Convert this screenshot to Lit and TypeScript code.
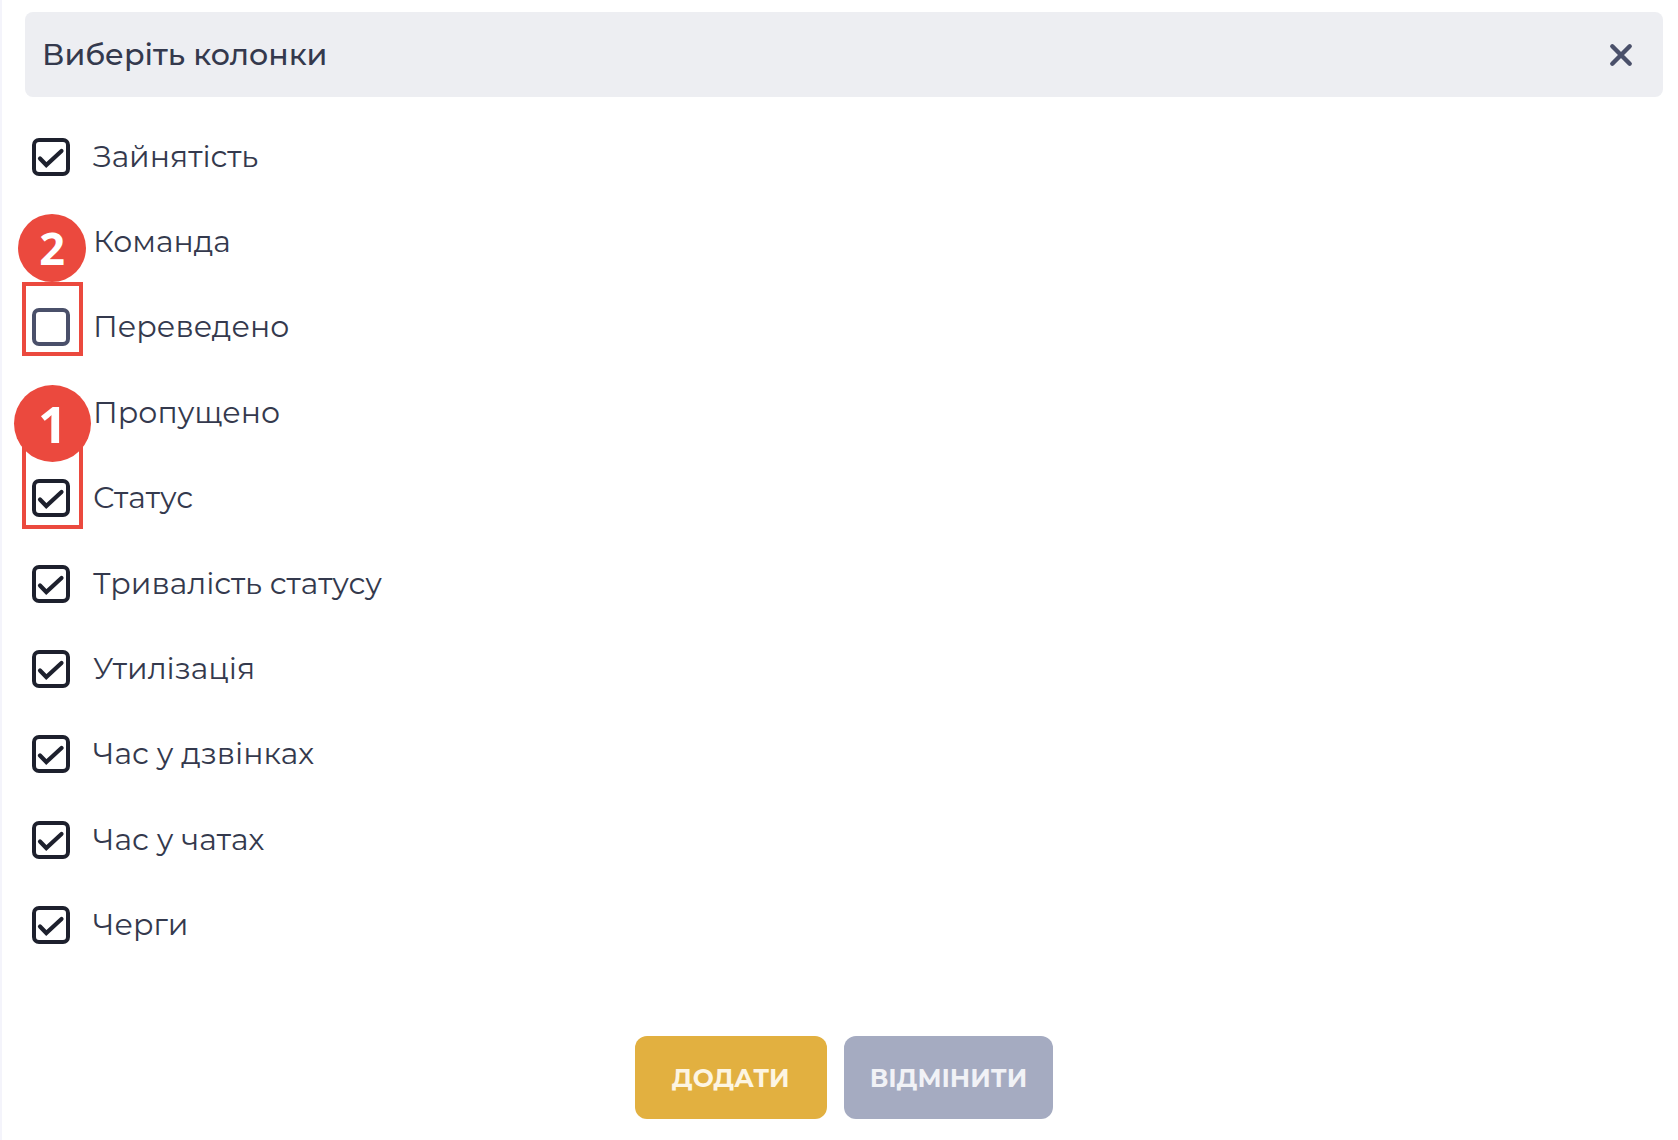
import { LitElement, html, css, svg, nothing } from "lit";
import { customElement, property, state } from "lit/decorators.js";
import { classMap } from "lit/directives/class-map.js";

interface Column {
  id: string;
  label: string;
  checked: boolean;
  callout?: { step: number; size: "small" | "large" };
}

const COLUMNS: Column[] = [
  { id: "occupancy", label: "Зайнятість", checked: true },
  { id: "team", label: "Команда", checked: true },
  { id: "transferred", label: "Переведено", checked: false, callout: { step: 2, size: "small" } },
  { id: "missed", label: "Пропущено", checked: true },
  { id: "status", label: "Статус", checked: true, callout: { step: 1, size: "large" } },
  { id: "status-duration", label: "Тривалість статусу", checked: true },
  { id: "utilization", label: "Утилізація", checked: true },
  { id: "call-time", label: "Час у дзвінках", checked: true },
  { id: "chat-time", label: "Час у чатах", checked: true },
  { id: "queues", label: "Черги", checked: true },
];

/** Numbered step marker with a frame around the checkbox it points at. */
@customElement("step-callout")
class StepCallout extends LitElement {
  @property({ type: Number }) step = 1;
  @property() size: "small" | "large" = "small";

  static styles = css`
    :host {
      display: contents;
    }
    .frame,
    .badge {
      position: absolute;
      box-sizing: border-box;
      pointer-events: none;
    }
    .frame {
      left: -3px;
      width: 61px;
      border: 4px solid #eb493e;
    }
    .badge {
      display: flex;
      align-items: center;
      justify-content: center;
      border-radius: 50%;
      background: #eb493e;
      color: #fff;
      font-family: "Open Sans", "Noto Sans", sans-serif;
      font-weight: 700;
      line-height: 1;
    }
    .small.frame {
      top: calc(50% - 46px);
      height: 74px;
    }
    .small.badge {
      top: calc(50% - 114px);
      left: -7px;
      width: 68px;
      height: 68px;
      font-size: 45px;
    }
    .large.frame {
      top: calc(50% - 68px);
      height: 99px;
    }
    .large.badge {
      top: calc(50% - 113px);
      left: -11px;
      width: 77px;
      height: 77px;
      font-size: 51px;
    }
  `;

  render() {
    const size = { small: this.size === "small", large: this.size === "large" };
    return html`
      <span class=${classMap({ frame: true, ...size })}></span>
      <span class=${classMap({ badge: true, ...size })}>${this.step}</span>
    `;
  }
}

@customElement("app-root")
class AppRoot extends LitElement {
  @state() private columns = COLUMNS;

  static styles = css`
    :host {
      display: block;
      font-family: Montserrat, Inter, "Noto Sans", sans-serif;
      color: #34394d;
    }
    .dialog {
      display: flex;
      flex-direction: column;
      box-sizing: border-box;
      min-height: 100vh;
      padding: 12px 15px 21px 23px;
      border-left: 2px solid #f4f4fb;
      background: #fff;
    }
    .header {
      display: flex;
      align-items: center;
      justify-content: space-between;
      min-height: 85px;
      padding: 0 23px 0 17px;
      box-sizing: border-box;
      border-radius: 8px;
      background: #edeef2;
    }
    .title {
      margin: 0;
      font-size: 30px;
      font-weight: 500;
      line-height: 36px;
    }
    .close {
      display: flex;
      padding: 0;
      border: 0;
      background: none;
      color: #4a506a;
      cursor: pointer;
    }
    .columns {
      flex: 1;
      display: grid;
      grid-auto-rows: 1fr;
      margin: 17px 0 0;
      padding: 0;
      list-style: none;
    }
    .row {
      position: relative;
      display: flex;
      align-items: center;
      padding-left: 7px;
    }
    .option {
      display: flex;
      align-items: center;
      gap: 23px;
      font-size: 30px;
      line-height: 36px;
      cursor: pointer;
    }
    .control {
      display: grid;
    }
    .control > * {
      grid-area: 1 / 1;
    }
    .box {
      appearance: none;
      box-sizing: border-box;
      width: 38px;
      height: 38px;
      margin: 0;
      border: 4px solid #4a506a;
      border-radius: 7px;
      background: #fff;
      cursor: pointer;
    }
    .box:checked {
      border-color: #1d202d;
    }
    .tick {
      color: #1d202d;
      visibility: hidden;
      pointer-events: none;
    }
    .box:checked + .tick {
      visibility: visible;
    }
    .actions {
      display: flex;
      justify-content: center;
      gap: 17px;
      padding-top: 68px;
    }
    .button {
      min-width: 192px;
      min-height: 83px;
      padding: 0 26px;
      border: 0;
      border-radius: 12px;
      font: inherit;
      font-size: 25px;
      font-weight: 700;
      line-height: 32px;
      cursor: pointer;
    }
    .add {
      background: #e2b040;
      color: #fdf5e2;
    }
    .cancel {
      background: #a5abc1;
      color: #f1f2f6;
    }
  `;

  private toggle(id: string) {
    this.columns = this.columns.map((c) => (c.id === id ? { ...c, checked: !c.checked } : c));
  }

  private renderTick() {
    return html`<svg class="tick" width="38" height="38" viewBox="0 0 38 38" aria-hidden="true">
      ${svg`<path d="M8 20.5 L14.3 27 L29.5 13" fill="none" stroke="currentColor" stroke-width="4.2" stroke-linecap="round" stroke-linejoin="miter" />`}
    </svg>`;
  }

  private renderRow(column: Column) {
    return html`<li class="row">
      <label class="option" for=${column.id}>
        <span class="control">
          <input
            class="box"
            type="checkbox"
            id=${column.id}
            .checked=${column.checked}
            @change=${() => this.toggle(column.id)}
          />
          ${this.renderTick()}
        </span>
        <span>${column.label}</span>
      </label>
      ${column.callout
        ? html`<step-callout .step=${column.callout.step} .size=${column.callout.size}></step-callout>`
        : nothing}
    </li>`;
  }

  render() {
    return html`<main class="dialog">
      <header class="header">
        <h1 class="title">Виберіть колонки</h1>
        <button class="close" type="button" aria-label="Закрити">
          <svg width="38" height="38" viewBox="0 0 38 38" aria-hidden="true">
            <path d="M10.3 10.3 L27.7 27.7 M27.7 10.3 L10.3 27.7" fill="none" stroke="currentColor" stroke-width="4.4" stroke-linecap="round" />
          </svg>
        </button>
      </header>
      <ul class="columns">
        ${this.columns.map((c) => this.renderRow(c))}
      </ul>
      <footer class="actions">
        <button class="button add" type="button">ДОДАТИ</button>
        <button class="button cancel" type="button">ВІДМІНИТИ</button>
      </footer>
    </main>`;
  }
}
